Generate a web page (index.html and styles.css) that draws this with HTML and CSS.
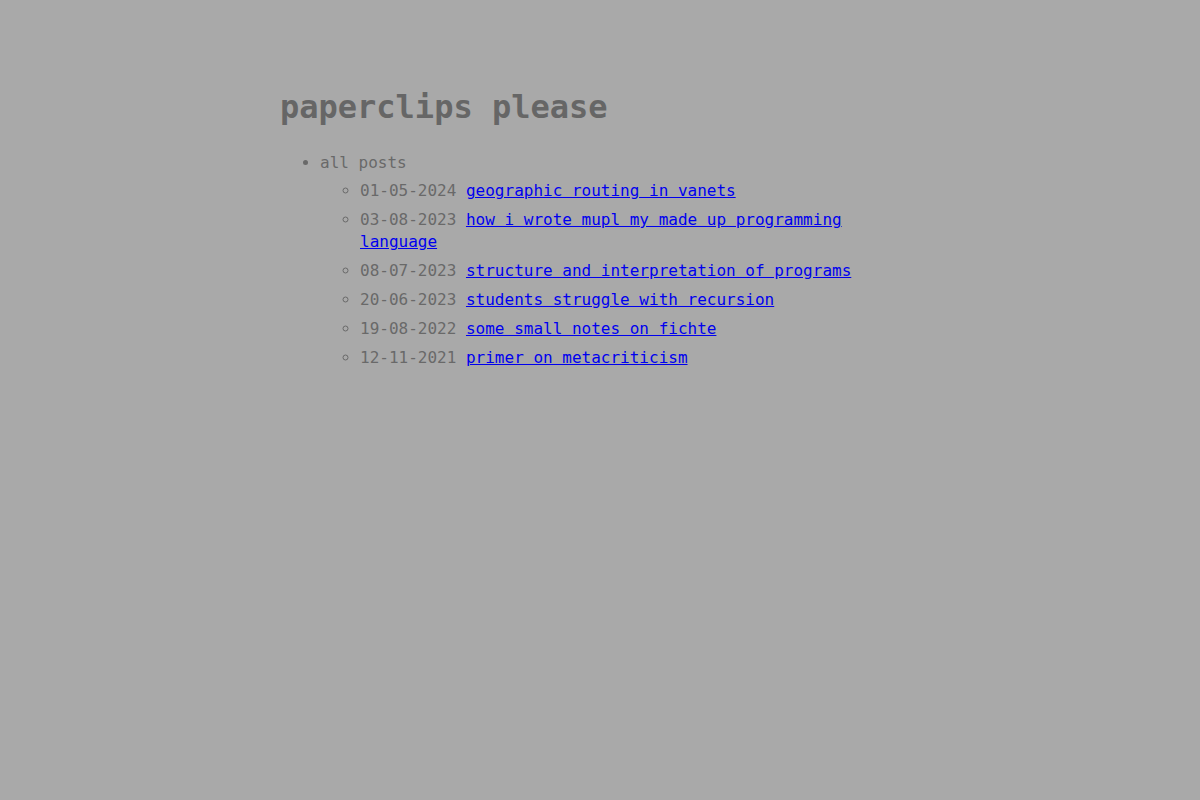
FILE: index.html
```html
<!DOCTYPE html>
<html>
<head>
<meta charset="utf-8">
<title>paperclips please</title>
<link rel="stylesheet" href="styles.css">
</head>
<body>
<main class="page">
  <h1 class="title">paperclips please</h1>
  <ul class="nav">
    <li>all posts
      <ul class="posts">
        <li><span class="date">01-05-2024</span> <a href="#">geographic routing in vanets</a></li>
        <li><span class="date">03-08-2023</span> <a href="#">how i wrote mupl my made up programming language</a></li>
        <li><span class="date">08-07-2023</span> <a href="#">structure and interpretation of programs</a></li>
        <li><span class="date">20-06-2023</span> <a href="#">students struggle with recursion</a></li>
        <li><span class="date">19-08-2022</span> <a href="#">some small notes on fichte</a></li>
        <li><span class="date">12-11-2021</span> <a href="#">primer on metacriticism</a></li>
      </ul>
    </li>
  </ul>
</main>
</body>
</html>
```
FILE: styles.css
```css
html, body {
  margin: 0;
  padding: 0;
  background: #a9a9a9;
}
body {
  font-family: "DejaVu Sans Mono", monospace;
  font-size: 16px;
  color: #696969;
  line-height: 22px;
}
.page {
  max-width: 640px;
  margin: 0 auto;
  padding-top: 68px;
}
.title {
  font-size: 32px;
  line-height: 37px;
  font-weight: bold;
  color: #666666;
  margin: 21px 0 26px;
}
.nav {
  margin: 0;
  padding-left: 40px;
  list-style: disc;
}
.posts {
  margin: 6px 0 0;
  padding-left: 40px;
  list-style: circle;
}
.posts li {
  margin-bottom: 7px;
}
a {
  color: #0000ee;
}
```
